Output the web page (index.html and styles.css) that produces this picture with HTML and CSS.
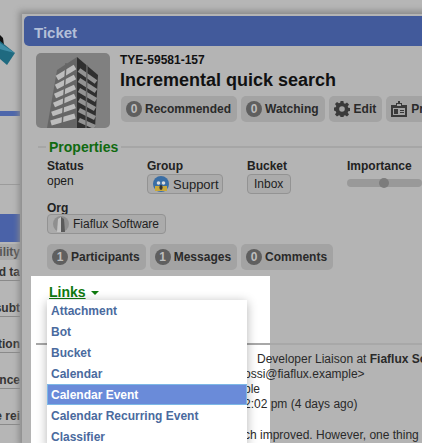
FILE: index.html
```html
<!DOCTYPE html>
<html lang="en">
<head>
    <meta charset="UTF-8">
    <meta name="viewport" content="width=device-width, initial-scale=1.0">
    <title>Ticket</title>
    <link rel="stylesheet" href="styles.css">
</head>
<body>
    <!-- page behind the popup, only a strip of it shows -->
    <div class="backdrop">
        <svg class="logo" width="20" height="30" viewBox="0 0 20 30">
            <path d="M0 0 L3 3 L4 10 L0 12 Z" fill="#111"/>
            <path d="M0 6 L15 18 L7 30 L0 24 Z" fill="#1f6a80"/>
            <path d="M0 8 L15 18 L3 15 L0 14 Z" fill="#3f8da6"/>
        </svg>
        <div class="bar"></div>
        <div class="rule"></div>
        <div class="block"></div>
        <div class="back-line first">Visibility</div>
        <div class="back-line link">Assigned ta</div>
        <div class="back-line link gap-a">Add subt</div>
        <div class="back-line link gap-b">Action</div>
        <div class="back-line link gap-a">Advance</div>
        <div class="back-line link gap-b">Service rei</div>
    </div>

    <div class="popup">
        <div class="popup-title">Ticket</div>
        <div class="popup-body">
            <div class="summary">
                <div class="tile">
                    <svg width="74" height="75" viewBox="0 0 74 75">
                        <path d="M21 17 L41 4 L41 75 L11 75 Z" fill="#666"/>
                        <path d="M41 4 L62 22 L59 75 L41 75 Z" fill="#2f2f2f"/>
                        <g stroke="#bdbdbd" stroke-width="5">
                            <path d="M21 25 L39 14"/>
                            <path d="M20 34 L39 24"/>
                            <path d="M19 43 L39 34"/>
                            <path d="M18 52 L39 43"/>
                            <path d="M16 61 L39 53"/>
                            <path d="M15 70 L39 63"/>
                        </g>
                        <g stroke="#929292" stroke-width="4.5">
                            <path d="M43 17 L60 29"/>
                            <path d="M43 27 L60 38"/>
                            <path d="M43 37 L60 47"/>
                            <path d="M43 47 L59 56"/>
                            <path d="M43 57 L59 65"/>
                            <path d="M43 67 L59 74"/>
                        </g>
                        <path d="M30 10 L26 75 M51 12 L50 75" stroke="#666" stroke-width="1.5"/>
                    </svg>
                </div>
                <div class="summary-text">
                    <div class="ticket-id">TYE-59581-157</div>
                    <h1>Incremental quick search</h1>
                    <div class="toolbar actions">
                        <div class="btn"><span class="badge">0</span>Recommended</div>
                        <div class="btn"><span class="badge">0</span>Watching</div>
                        <div class="btn">
                            <svg class="btn-icon" width="16" height="16" viewBox="0 0 16 16">
                                <path fill="#3a3a3a" fill-rule="evenodd" d="M6.6 0h2.8l.4 2.2 1.3.6 1.9-1.3 2 2-1.3 1.9.6 1.3 2.2.4v2.8l-2.2.4-.6 1.3 1.3 1.9-2 2-1.9-1.3-1.3.6-.4 2.2H6.6l-.4-2.2-1.3-.6-1.9 1.3-2-2 1.3-1.9-.6-1.3L-.5 9.4V6.6l2.2-.4.6-1.3L1 3l2-2 1.9 1.3 1.3-.6zM8 5.2a2.8 2.8 0 1 0 0 5.6 2.8 2.8 0 0 0 0-5.6z"/>
                            </svg>Edit
                        </div>
                        <div class="btn">
                            <svg class="btn-icon" width="16" height="16" viewBox="0 0 16 16">
                                <path fill="#3a3a3a" fill-rule="evenodd" d="M0 4h5V2h2V0h2v2h2v2h5v12H0zM6 3v2h4V3zM2 7v7h12V7z"/>
                                <path fill="#3a3a3a" d="M3 8h4v5H3zM9 9h4v1H9zM9 11h4v1H9z"/>
                            </svg>Print
                        </div>
                    </div>
                </div>
            </div>

            <fieldset class="props">
                <legend>Properties</legend>
                <div class="props-row">
                    <div>
                        <div class="prop-label">Status</div>
                        <div class="prop-value">open</div>
                    </div>
                    <div>
                        <div class="prop-label">Group</div>
                        <div class="chip chip-big">
                            <svg class="chip-icon" width="16" height="16" viewBox="0 0 16 16">
                                <circle cx="8" cy="8" r="8" fill="#3a6ea5"/>
                                <path d="M2 10 H14 V15 H2 Z" fill="#c9a83a"/>
                                <circle cx="5.5" cy="7" r="1.8" fill="#ddd"/>
                                <circle cx="10.5" cy="7" r="1.8" fill="#ddd"/>
                                <ellipse cx="8" cy="11.5" rx="1.6" ry="2.4" fill="#333"/>
                            </svg>Support
                        </div>
                    </div>
                    <div>
                        <div class="prop-label">Bucket</div>
                        <div class="chip chip-plain">Inbox</div>
                    </div>
                    <div>
                        <div class="prop-label">Importance</div>
                        <div class="slider"><span class="knob"></span></div>
                    </div>
                </div>
                <div class="prop-label org-label">Org</div>
                <div class="chip">
                    <svg class="chip-icon" width="16" height="16" viewBox="0 0 16 16">
                        <circle cx="8" cy="8" r="8" fill="#8f8f8f"/>
                        <path d="M5 3 L8 1 L8 16 L4 16 Z" fill="#c4c4c4"/>
                        <path d="M8 1 L11 3 L12 16 L8 16 Z" fill="#5a5a5a"/>
                    </svg>Fiaflux Software
                </div>
            </fieldset>

            <div class="toolbar tabs">
                <div class="btn"><span class="badge">1</span>Participants</div>
                <div class="btn"><span class="badge">1</span>Messages</div>
                <div class="btn"><span class="badge">0</span>Comments</div>
            </div>

            <div class="links">
                <div class="spot"></div>
                <span class="links-toggle">Links</span><span class="caret"></span>
                <ul class="menu">
                    <li>Attachment</li>
                    <li>Bot</li>
                    <li>Bucket</li>
                    <li>Calendar</li>
                    <li class="active">Calendar Event</li>
                    <li>Calendar Recurring Event</li>
                    <li>Classifier</li>
                </ul>
            </div>

            <div class="message">
                <div class="msg-line"><span class="lead lead-name">Dan Rossi,</span>Developer Liaison at <b>Fiaflux Software</b></div>
                <div class="msg-line"><span class="lead">To: &lt;dan.r</span>ossi@fiaflux.example&gt;</div>
                <div class="msg-line"><span class="lead">support@exam</span>ple</div>
                <div class="msg-line"><span class="lead">Mon, 12 Mar, 1</span>2:02 pm (4 days ago)</div>
                <div class="msg-line msg-para"><span class="lead">The search is mu</span>ch improved. However, one thing</div>
            </div>
        </div>
    </div>
</body>
</html>
```

FILE: styles.css
```css
html, body {
    margin: 0;
    padding: 0;
}
body {
    display: flex;
    width: 422px;
    height: 443px;
    overflow: hidden;
    background-color: #b6b6b6;
    font-family: "Liberation Sans", Arial, sans-serif;
    font-size: 12px;
    color: #1a1a1a;
}

/* left strip */
.backdrop {
    flex: none;
    width: 20px;
    height: 443px;
    overflow: hidden;
    background-color: #b6b6b6;
}
.logo {
    display: block;
    margin-top: 35px;
}
.bar {
    height: 5px;
    margin-top: 46px;
    background-color: #4d66ab;
}
.rule {
    height: 1px;
    margin-top: 68px;
    background-color: #9b9b9b;
}
.block {
    height: 28px;
    margin-top: 29px;
    background-color: #4a62a8;
}
.back-line {
    display: flex;
    justify-content: flex-end;
    height: 16px;
    line-height: 16px;
    white-space: nowrap;
    font-weight: bold;
    color: #333;
    border-bottom: 1px solid #8a8a8a;
}
.first {
    margin-top: 2px;
    background-color: #a9a9a9;
    border-bottom: none;
    color: #555;
}
.link {
    margin-top: 4px;
}
.gap-a {
    margin-top: 19px;
}
.gap-b {
    margin-top: 19px;
}

/* popup */
.popup {
    flex: none;
    width: 500px;
    margin: 14px 0 0 2px;
    padding: 2px 0 0 2px;
    background-color: #b4b4b4;
    box-shadow: 0 0 6px 3px #8a8a8a;
}
.popup-title {
    height: 30px;
    padding-left: 10px;
    line-height: 34px;
    font-size: 15px;
    font-weight: bold;
    color: #b3bfd8;
    background-color: #425a9b;
    border-radius: 5px 0 0 5px;
}
.popup-body {
    padding: 7px 0 0 12px;
}
.summary {
    display: flex;
    gap: 10px;
}
.tile {
    flex: none;
    width: 74px;
    height: 75px;
    overflow: hidden;
    background-color: #808080;
    border-radius: 5px;
}
.tile svg {
    display: block;
}
.ticket-id {
    font-weight: bold;
    line-height: 15px;
    color: #111;
}
h1 {
    margin: 0;
    font-size: 18px;
    line-height: 24px;
    color: #111;
}
.toolbar {
    display: flex;
    gap: 4px;
    white-space: nowrap;
}
.actions {
    margin: 4px 0 0 1px;
}
.btn {
    display: flex;
    align-items: center;
    height: 26px;
    padding: 0 6px 0 5px;
    font-weight: bold;
    color: #2a2a2a;
    background-color: #a3a3a3;
    border-radius: 5px;
}
.badge {
    width: 16px;
    height: 16px;
    margin-right: 3px;
    line-height: 16px;
    text-align: center;
    color: #bdbdbd;
    background-color: #5f5f5f;
    border-radius: 50%;
}
.btn-icon {
    margin-right: 4px;
}

/* properties */
.props {
    margin: 12px 0 0 2px;
    padding: 5px 0 0 9px;
    border: none;
    border-top: 2px solid #a6a6a6;
}
.props legend {
    margin-left: -1px;
    padding: 0 3px;
    font-size: 14px;
    font-weight: bold;
    line-height: 14px;
    color: #106a10;
}
.props-row {
    display: grid;
    grid-template-columns: repeat(4, 100px);
}
.prop-label {
    font-weight: bold;
    line-height: 15px;
    color: #222;
}
.prop-value {
    line-height: 15px;
}
.org-label {
    margin-top: 7px;
    line-height: 12px;
}
.chip {
    display: inline-flex;
    align-items: center;
    height: 18px;
    padding: 0 6px 0 5px;
    background-color: #ababab;
    border: 1px solid #939393;
    border-radius: 4px;
    color: #222;
}
.chip-big {
    padding-right: 3px;
    font-size: 13px;
}
.chip-plain {
    padding: 0 7px 0 6px;
}
.chip-icon {
    margin-right: 4px;
}
.slider {
    position: relative;
    width: 75px;
    height: 8px;
    margin-top: 5px;
    background-color: #999;
    border-radius: 4px;
}
.knob {
    position: absolute;
    left: 32px;
    top: -1px;
    width: 10px;
    height: 10px;
    background-color: #7c7c7c;
    border-radius: 50%;
}
.tabs {
    margin: 9px 0 0 11px;
}

/* links menu, lifted out of the dimmed page */
.links {
    position: relative;
    height: 72px;
    margin: 1px 0 0 13px;
    padding-top: 13px;
    box-sizing: border-box;
    font-size: 14px;
    font-weight: bold;
    line-height: 16px;
}
.spot {
    position: absolute;
    left: -18px;
    top: 5px;
    width: 239px;
    height: 200px;
    background-color: #fff;
}
.links-toggle {
    position: relative;
    color: #0f7a0f;
    text-decoration: underline;
}
.caret {
    position: relative;
    display: inline-block;
    margin-left: 5px;
    vertical-align: 2px;
    border-left: 4px solid transparent;
    border-right: 4px solid transparent;
    border-top: 4px solid #0f7a0f;
}
.menu {
    position: absolute;
    z-index: 3;
    left: -2px;
    top: 29px;
    width: 200px;
    margin: 0;
    padding: 0;
    list-style: none;
    background-color: #fff;
    box-shadow: 0 2px 10px rgba(0, 0, 0, 0.3);
    font-size: 12px;
}
.menu li {
    height: 21px;
    padding-left: 4px;
    line-height: 22px;
    color: #4a6a9e;
    box-sizing: border-box;
}
.menu .active {
    color: #fff;
    line-height: 21px;
    background-color: #6a8bd9;
    border: 1px solid #7db8e6;
    padding-left: 3px;
}

.message {
    position: relative;
    padding-top: 7px;
    border-top: 2px solid #a8a8a8;
    white-space: nowrap;
    line-height: 15px;
    color: #2a2a2a;
}
.msg-line {
    display: flex;
    white-space: pre;
}
.lead {
    flex: none;
    width: 208px;
    text-align: right;
}
.lead-name {
    width: 221px;
    padding-right: 13px;
    box-sizing: border-box;
}
.msg-para {
    margin-top: 16px;
}
```
